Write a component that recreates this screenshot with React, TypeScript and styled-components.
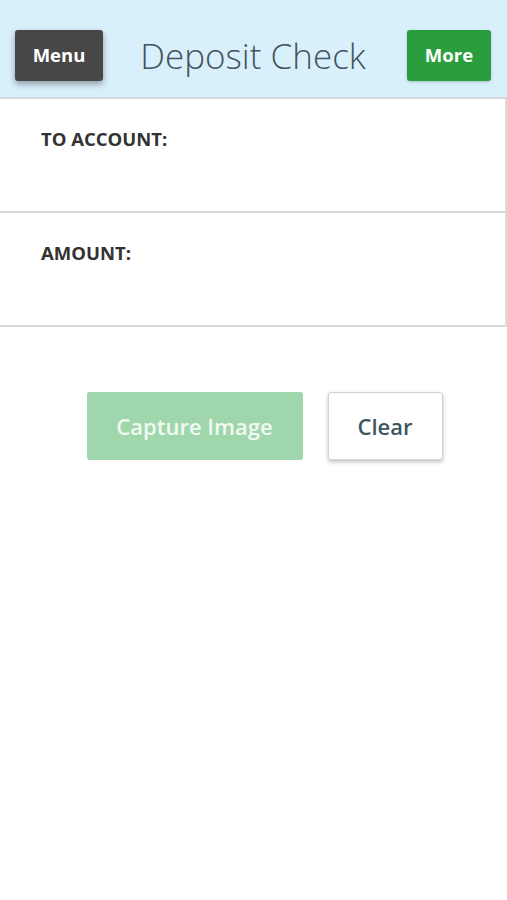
import React from "react";
import styled, { createGlobalStyle } from "styled-components";

const Global = createGlobalStyle`
  html, body { margin: 0; padding: 0; background: #ffffff; }
  body { font-family: "Open Sans", "Liberation Sans", sans-serif; }
  * { box-sizing: border-box; }
`;

const Page = styled.div`
  width: 507px;
  min-height: 900px;
  background: #ffffff;
`;

const Header = styled.header`
  height: 99px;
  background: #d8effc;
  display: flex;
  align-items: center;
  justify-content: space-between;
  padding: 26px 16px 12px 15px;
  border-bottom: 2px solid #d4d8da;
`;

const NavButton = styled.button<{ $variant: "dark" | "green" }>`
  height: 51px;
  padding: 0 0 2px;
  width: ${(p) => (p.$variant === "dark" ? "88px" : "84px")};
  border: none;
  border-radius: 3px;
  background: ${(p) => (p.$variant === "dark" ? "#474747" : "#2a9e3c")};
  color: #ffffff;
  font-family: "Open Sans", sans-serif;
  font-weight: 700;
  font-size: 18.5px;
  box-shadow: ${(p) =>
    p.$variant === "dark" ? "0 3px 6px rgba(0,0,0,0.35)" : "0 1px 3px rgba(0,0,0,0.2)"};
  cursor: pointer;
`;

const Title = styled.h1`
  margin: 0 4px 0 0;
  font-family: "Open Sans", sans-serif;
  font-weight: 300;
  font-size: 35px;
  color: #44545c;
`;

const Field = styled.section`
  height: 114px;
  border-right: 2px solid #d9dcdd;
  border-bottom: 2px solid #d4d8da;
  padding: 27px 0 0 41px;
`;

const Label = styled.div`
  font-family: "Open Sans", sans-serif;
  font-weight: 700;
  font-size: 18.5px;
  color: #333333;
`;

const Actions = styled.div`
  display: flex;
  justify-content: center;
  gap: 25px;
  margin-top: 65px;
  padding-left: 22px;
`;

const ActionButton = styled.button<{ $primary?: boolean }>`
  height: 68px;
  width: ${(p) => (p.$primary ? "216px" : "115px")};
  border-radius: 3px;
  font-family: "Open Sans", sans-serif;
  font-weight: 600;
  font-size: 22px;
  cursor: pointer;
  border: ${(p) => (p.$primary ? "none" : "1px solid #cfd3d5")};
  background: ${(p) => (p.$primary ? "#a0d6ac" : "#ffffff")};
  color: ${(p) => (p.$primary ? "#f1faf2" : "#3e5561")};
  box-shadow: ${(p) => (p.$primary ? "none" : "0 2px 4px rgba(0,0,0,0.25)")};
`;

export default function App() {
  return (
    <Page>
      <Global />
      <Header>
        <NavButton $variant="dark">Menu</NavButton>
        <Title>Deposit Check</Title>
        <NavButton $variant="green">More</NavButton>
      </Header>
      <Field>
        <Label>TO ACCOUNT:</Label>
      </Field>
      <Field>
        <Label>AMOUNT:</Label>
      </Field>
      <Actions>
        <ActionButton $primary>Capture Image</ActionButton>
        <ActionButton>Clear</ActionButton>
      </Actions>
    </Page>
  );
}
